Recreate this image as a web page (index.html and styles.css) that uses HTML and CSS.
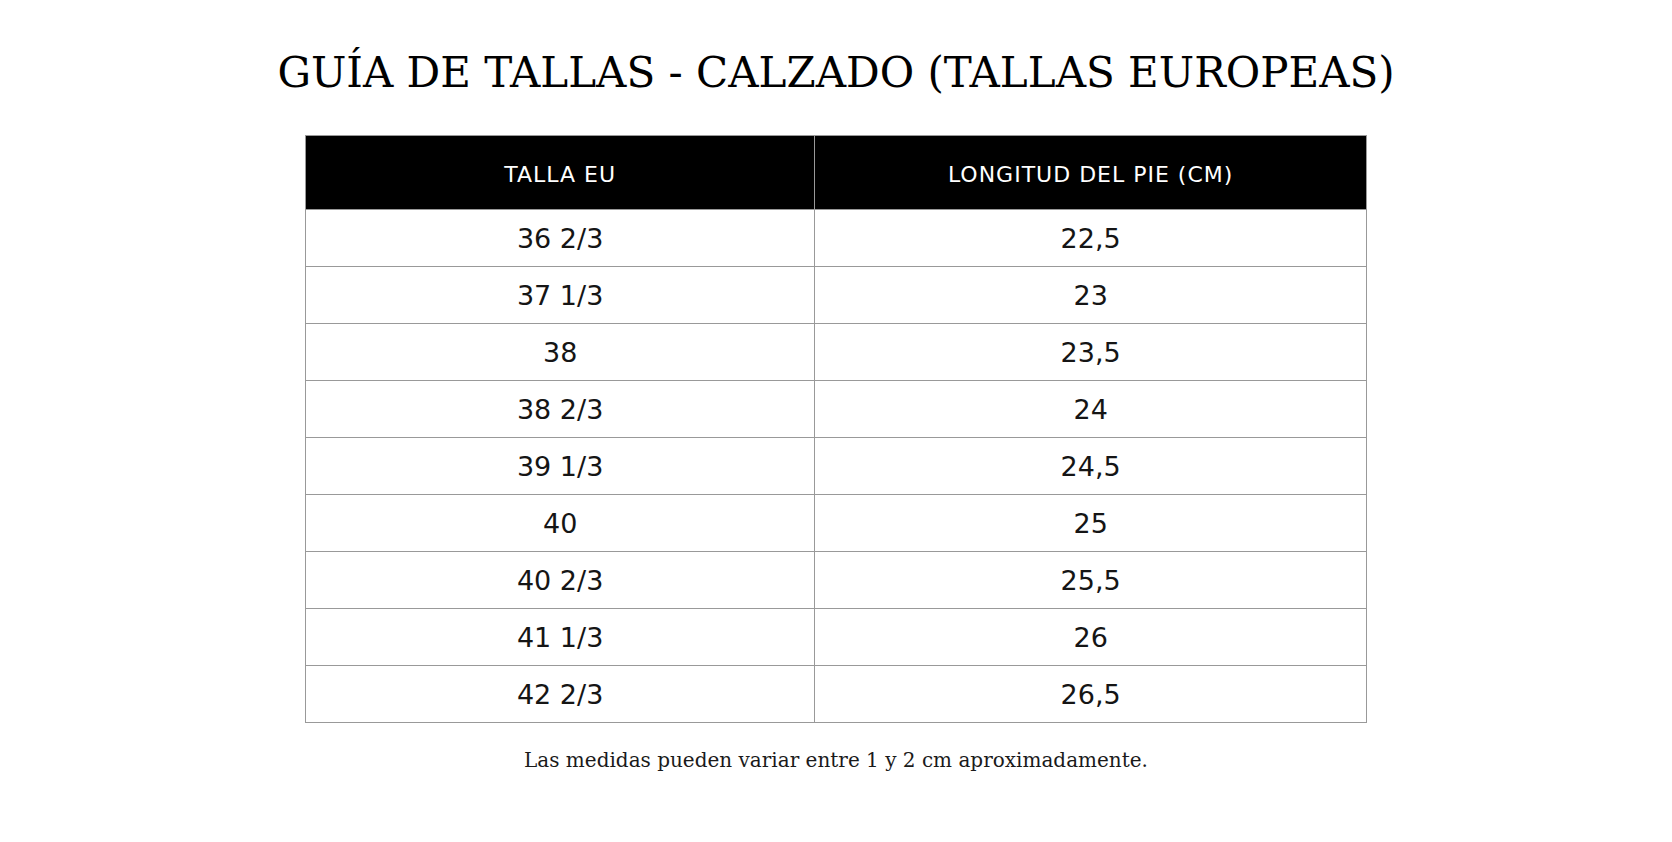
FILE: index.html
```html
<!DOCTYPE html>
<html lang="es">
<head>
<meta charset="utf-8">
<title>Guía de tallas</title>
<link rel="stylesheet" href="styles.css">
</head>
<body>
<main class="page">
  <h1 class="title">GUÍA DE TALLAS - CALZADO (TALLAS EUROPEAS)</h1>
  <table class="sizes">
    <thead>
      <tr><th class="col-eu">TALLA EU</th><th>LONGITUD DEL PIE (CM)</th></tr>
    </thead>
    <tbody>
      <tr><td>36 2/3</td><td>22,5</td></tr>
      <tr><td>37 1/3</td><td>23</td></tr>
      <tr><td>38</td><td>23,5</td></tr>
      <tr><td>38 2/3</td><td>24</td></tr>
      <tr><td>39 1/3</td><td>24,5</td></tr>
      <tr><td>40</td><td>25</td></tr>
      <tr><td>40 2/3</td><td>25,5</td></tr>
      <tr><td>41 1/3</td><td>26</td></tr>
      <tr><td>42 2/3</td><td>26,5</td></tr>
    </tbody>
  </table>
  <p class="note">Las medidas pueden variar entre 1 y 2 cm aproximadamente.</p>
</main>
</body>
</html>
```

FILE: styles.css
```css
html, body {
  margin: 0;
  padding: 0;
  background: #ffffff;
}

.page {
  display: flex;
  flex-direction: column;
  align-items: center;
  padding-top: 48px;
}

.title {
  margin: 0 0 38px;
  font-family: "DejaVu Serif", serif;
  font-weight: normal;
  font-size: 42px;
  line-height: 49px;
  color: #000000;
  white-space: nowrap;
}

.sizes {
  width: 1062px;
  border-collapse: collapse;
  font-family: "DejaVu Sans", sans-serif;
}

.sizes th,
.sizes td {
  border: 1px solid #999999;
  text-align: center;
}

.sizes th {
  background: #000000;
  color: #ffffff;
  font-weight: normal;
  font-size: 22px;
  letter-spacing: 1px;
  line-height: 25px;
  padding: 26px 10px 22px;
}

.sizes .col-eu {
  width: 48%;
}

.sizes td {
  color: #151515;
  font-size: 27px;
  line-height: 30px;
  padding: 14px 10px 12px;
}

.note {
  margin: 26px 0 0;
  font-family: "DejaVu Serif", serif;
  font-size: 20px;
  line-height: 23px;
  color: #1a1a1a;
}
```
